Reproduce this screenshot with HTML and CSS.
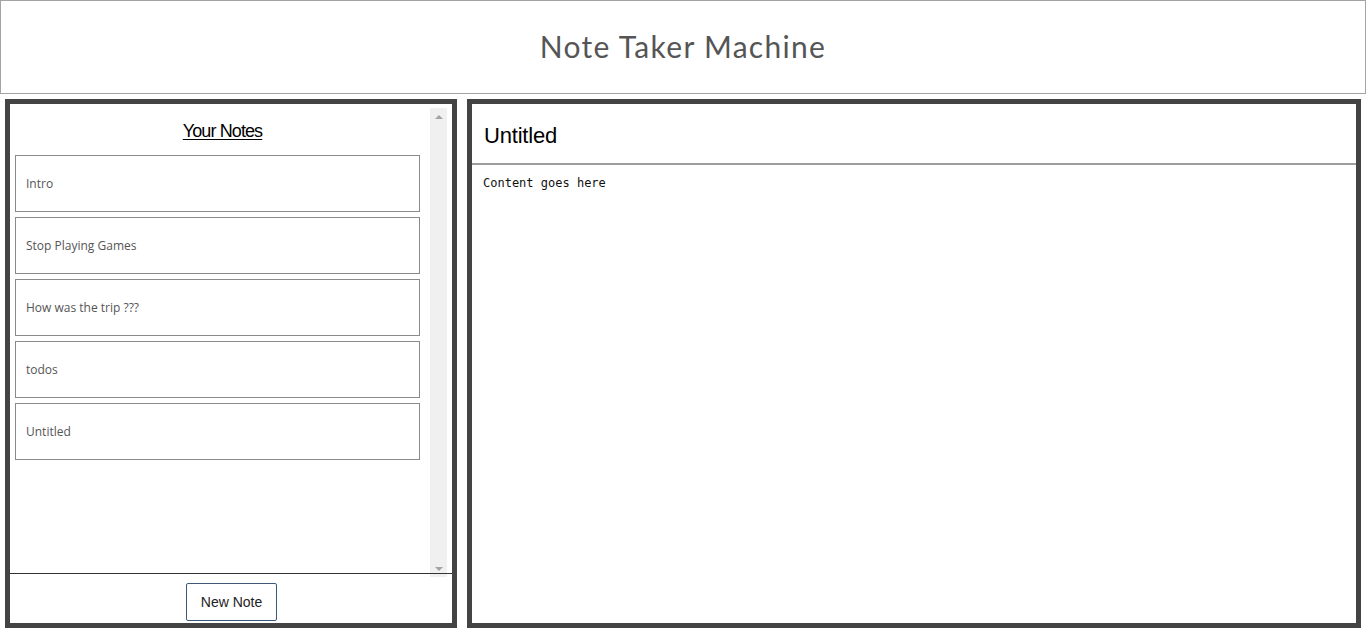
FILE: index.html
```html
<!DOCTYPE html>
<html lang="en">
<head>
<meta charset="utf-8">
<title>Note Taker Machine</title>
<link rel="stylesheet" href="styles.css">
</head>
<body>
  <header class="top-bar">
    <h1 class="app-title">Note Taker Machine</h1>
  </header>
  <main class="workspace">
    <section class="sidebar">
      <div class="list-wrap">
        <div class="note-list">
          <h2 class="list-heading">Your Notes</h2>
          <div class="note-item">Intro</div>
          <div class="note-item">Stop Playing Games</div>
          <div class="note-item">How was the trip ???</div>
          <div class="note-item">todos</div>
          <div class="note-item">Untitled</div>
        </div>
        <div class="scroll-rail" aria-hidden="true">
          <span class="rail-btn"><span class="arrow-up"></span></span>
          <span class="rail-btn"><span class="arrow-down"></span></span>
        </div>
      </div>
      <div class="sidebar-footer">
        <button class="new-note-btn" type="button">New Note</button>
      </div>
    </section>
    <section class="editor">
      <div class="editor-title">Untitled</div>
      <div class="editor-body">Content goes here</div>
    </section>
  </main>
</body>
</html>
```
FILE: styles.css
```css
* {
  box-sizing: border-box;
}

html, body {
  margin: 0;
  padding: 0;
  background: #ffffff;
  height: 631px;
  overflow: hidden;
}

.top-bar {
  height: 94px;
  border: 1px solid #a3a3a3;
  display: flex;
  align-items: center;
  justify-content: center;
}

.app-title {
  margin: 0;
  font-family: "Comic Sans MS", "Lato", "Open Sans", sans-serif;
  font-weight: normal;
  font-size: 30px;
  color: #555555;
  letter-spacing: 1.3px;
  padding-bottom: 2px;
}

.workspace {
  display: grid;
  grid-template-columns: 452px 1fr;
  column-gap: 10px;
  padding: 5px 5px 0 5px;
  height: 534px;
}

.sidebar {
  border: 5px solid #434343;
  display: flex;
  flex-direction: column;
  min-height: 0;
  height: 529px;
}

.list-wrap {
  flex: 1;
  min-height: 0;
  display: flex;
  margin: 4px 5px 0 0;
}

.note-list {
  flex: 1;
  min-width: 0;
  padding: 0 10px 0 5px;
  overflow: hidden;
}

.scroll-rail {
  width: 17px;
  background: #f0f0f0;
  display: flex;
  flex-direction: column;
  justify-content: space-between;
}

.rail-btn {
  height: 17px;
  display: flex;
  align-items: center;
  justify-content: center;
}

.arrow-up {
  width: 0;
  height: 0;
  border-left: 4px solid transparent;
  border-right: 4px solid transparent;
  border-bottom: 4px solid #a3a3a3;
}

.arrow-down {
  width: 0;
  height: 0;
  border-left: 4px solid transparent;
  border-right: 4px solid transparent;
  border-top: 4px solid #a3a3a3;
}

.list-heading {
  margin: 12px 0 13px 0;
  text-align: center;
  font-family: "Liberation Sans Narrow", "Liberation Sans", sans-serif;
  font-weight: normal;
  font-size: 18px;
  line-height: 22px;
  letter-spacing: -0.9px;
  color: #000000;
  text-decoration: underline;
  text-underline-offset: 2px;
  padding-left: 10px;
}

.note-item {
  height: 57px;
  margin-bottom: 5px;
  border: 1px solid #8a8a8a;
  padding: 0 10px;
  display: flex;
  align-items: center;
  font-family: "Open Sans", "Noto Sans", sans-serif;
  font-size: 12px;
  color: #555555;
}

.sidebar-footer {
  position: relative;
  z-index: 1;
  margin-top: -4px;
  height: 50px;
  border-top: 1px solid #333333;
  display: flex;
  justify-content: center;
  padding-top: 9px;
}

.new-note-btn {
  width: 91px;
  height: 38px;
  background: #ffffff;
  border: 1px solid #3c5a78;
  border-radius: 2px;
  font-family: "Liberation Sans", Arial, sans-serif;
  font-size: 14px;
  color: #222222;
  padding: 0;
  margin-left: 1px;
}

.editor {
  border: 5px solid #434343;
  height: 529px;
  display: flex;
  flex-direction: column;
}

.editor-title {
  height: 61px;
  border-bottom: 2px solid #9e9e9e;
  padding: 19px 0 0 12px;
  font-family: "Liberation Sans Narrow", "Liberation Sans", sans-serif;
  font-size: 22px;
  line-height: 26px;
  letter-spacing: -0.2px;
  color: #000000;
}

.editor-body {
  padding: 10px 0 0 11px;
  font-family: "DejaVu Sans Mono", "Liberation Mono", monospace;
  font-size: 12px;
  line-height: 16px;
  color: #111111;
}
```
